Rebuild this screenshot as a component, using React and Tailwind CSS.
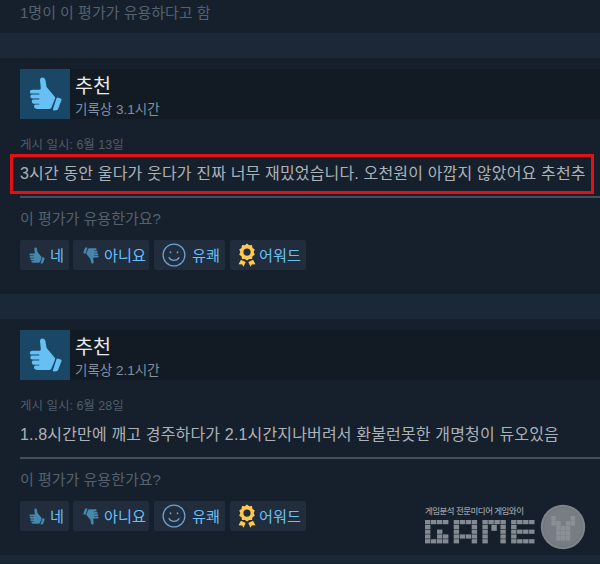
const REVIEWS = [
    {
        id: 1,
        hours: '기록상 3.1시간',
        posted: '게시 일시: 6월 13일',
        text: '3시간 동안 울다가 웃다가 진짜 너무 재밌었습니다. 오천원이 아깝지 않았어요 추천추',
        highlighted: true,
    },
    {
        id: 2,
        hours: '기록상 2.1시간',
        posted: '게시 일시: 6월 28일',
        text: '1..8시간만에 깨고 경주하다가 2.1시간지나버려서 환불런못한 개명청이 듀오있음',
        highlighted: false,
    },
]

// Block grid of the wordmark: [column, row] offsets come from the string position
const BLOCKS = [
    ['####', '#...', '#.#.', '#.##', '####'],
    ['####', '#..#', '#..#', '####', '#..#'],
    ['####', '#..#', '#..#', '#..#', '#..#'],
    ['####', '#...', '####', '#...', '####'],
]

const COIN = ['#...#', '##.##', '.###.', '.###.', '.###.']

function Thumb({ className }) {
    return (
        <svg viewBox="9 7 33 34" className={className} fill="currentColor">
            <path d="M20 10.200c0-1.700 1-2.700 2.500-2.700 1.500 0 2.500.9 2.900 2.500l1.200 7 8 9.400c.6.700.7 1.500.4 2.300l-3.500 8.600c-.4 1.100-1.200 1.600-2.300 1.600H17c-1.700 0-3-1-3-2.300 0-1 .5-1.700 1.300-2h4v-.9h-5.400c-1.300-.2-2.100-1.100-2.100-2.200 0-1 .5-1.600 1.200-2h6.300v-.9h-6.900c-1.300-.2-2-1-2-2.100 0-1 .5-1.600 1.300-2h7.600v-.9h-8.600c-.5-.4-.8-1-.8-1.700 0-1.400 1-2.200 2.500-2.200h7.100c.9 0 1.400-.6 1.300-1.600z" />
            <path d="M37.600 27.600l3 .8c.8.200 1.100.7.900 1.500l-3.300 8.900c-.4.900-.9 1.400-1.800 1.500l-2.500.1c-.9 0-1.200-.5-.9-1.300l3.400-10.500c.2-.7.600-1 1.200-1z" />
        </svg>
    )
}

function Smile() {
    return (
        <svg viewBox="0 0 24 24" className="w-6 h-6" fill="none" stroke="#6a9fca" strokeWidth="1.300" strokeLinecap="round">
            <circle cx="12" cy="12" r="10.900" />
            <path d="M7 14.500c1.800 3.800 8.200 3.800 10 0" />
            <path d="M8.500 9v.4M15.500 9v.4" strokeWidth="1.700" />
        </svg>
    )
}

function Award() {
    return (
        <svg viewBox="0 0 18 24" className="w-[18px] h-6" fill="#ffc94f">
            <path fillRule="evenodd" d="M9 .5l2.200 1.800 2.800-.2.500 2.800 2.300 1.600-1.100 2.600 1.100 2.600-2.300 1.600-.5 2.700-2.800-.1L9 17.600l-2.200-1.700-2.800.1-.5-2.700-2.300-1.600 1.100-2.600-1.100-2.600 2.300-1.600L4 2.100l2.800.2zM9 5.500a3.600 3.600 0 1 0 0 7.200 3.600 3.600 0 0 0 0-7.200z" />
            <path d="M3 16.800l4.700 2.200-2.200 4.700-1.300-2.200-3.700-.3zM15 16.800l-4.700 2.200 2.200 4.700 1.300-2.200 3.700-.3z" />
        </svg>
    )
}

function VoteButton({ className, icon, label }) {
    return (
        <div className={`h-[30px] flex items-center rounded-[2px] bg-[#212c3d] text-[15.200px] text-[#67c1f5] whitespace-nowrap ${className}`}>
            {icon}
            <span className="pt-[2px]">{label}</span>
        </div>
    )
}

function Review({ review }) {
    return (
        <article className="h-[236px] shrink-0 bg-[#16202c] pl-5 pt-[11px]">
            <header className="h-[50px] flex bg-[#121a23]">
                <div className="w-[50px] h-[50px] flex items-center justify-center bg-[#1a4766]">
                    <Thumb className="w-[33px] h-[34px] text-[#66c0f4]" />
                </div>
                <div className="pl-[5px] pt-[5px]">
                    <div className="text-[19.600px] leading-6 text-[#e8eaec]">추천</div>
                    <div className="text-[13.500px] leading-5 pt-[2px] text-[#8091a2]">{review.hours}</div>
                </div>
            </header>
            <div className="pt-4 h-[35px] text-[12.500px] leading-5 text-[#4f5d6b]">{review.posted}</div>
            <div className={`-ml-[10px] w-[584px] h-10 border-[3px] pl-[7px] flex items-center text-base tracking-[0.160px] whitespace-nowrap text-[#acb2b8] ${review.highlighted ? 'border-[#e41014]' : 'border-transparent'}`}>
                {review.text}
            </div>
            <div className="mt-[2px] h-[2px] bg-[#464e5a]" />
            <div className="pt-[9px] text-[15px] leading-6 text-[#55616e]">이 평가가 유용한가요?</div>
            <div className="pt-[9px] flex">
                <VoteButton className="w-[49px] pl-[9px] gap-[5px]" icon={<Thumb className="w-4 h-[17px] text-[#4687ae]" />} label="네" />
                <VoteButton className="w-[76px] ml-1 pl-[10px] gap-[5px]" icon={<Thumb className="w-4 h-[17px] rotate-180 text-[#4687ae]" />} label="아니요" />
                <VoteButton className="w-[71px] ml-[5px] pl-[8px] gap-[6px]" icon={<Smile />} label="유쾌" />
                <VoteButton className="w-[76px] ml-[5px] pl-[8px] gap-[3px]" icon={<Award />} label="어워드" />
            </div>
        </article>
    )
}

function Watermark() {
    return (
        <div className="absolute left-[425px] top-[504px] flex gap-[5px]">
            <div className="w-[110px] shrink-0">
                <div className="text-[8.500px] leading-[14px] tracking-[-0.530px] font-medium whitespace-nowrap text-[#979da4]">게임분석 전문미디어 게임와이</div>
                <svg viewBox="0 0 110 24" className="w-[110px] h-6 mt-[2px]" fill="#838a92">
                    {BLOCKS.map((rows, l) => rows.map((row, y) => [...row].map((c, x) => c === '#' && (
                        <rect key={`${l}-${y}-${x}`} x={l * 28.7 + x * 6} y={y * 4.8} width="5.400" height="4.200" />
                    ))))}
                    <rect x="66.400" y="4.800" width="5.400" height="6" />
                </svg>
            </div>
            <svg viewBox="0 0 46 46" className="w-[46px] h-[46px] shrink-0">
                <circle cx="23" cy="23" r="22.200" fill="#7d8389" />
                <circle cx="23" cy="23" r="19.500" fill="#777d83" stroke="#6c7279" strokeWidth="0.800" />
                {COIN.map((row, y) => [...row].map((c, x) => c === '#' && (
                    <rect key={`${y}-${x}`} x={11.4 + x * 4.8} y={12 + y * 5} width="4.400" height="4.600" fill="#8b9096" />
                )))}
            </svg>
        </div>
    )
}

export default function App() {
    return (
        <div className="relative w-[600px] h-[564px] overflow-hidden flex flex-col bg-[#1b2838] font-['Liberation_Sans','Noto_Sans_CJK_KR',sans-serif]">
            <div className="flex flex-col gap-[25px]">
                <div className="h-[33px] shrink-0 bg-[#16202c] pl-5 pt-px text-[15px] leading-6 text-[#55616e]">1명이 이 평가가 유용하다고 함</div>
                {REVIEWS.map(r => <Review key={r.id} review={r} />)}
            </div>
            <div className="mt-2 h-px bg-[#16202c]" />
            <Watermark />
        </div>
    )
}
